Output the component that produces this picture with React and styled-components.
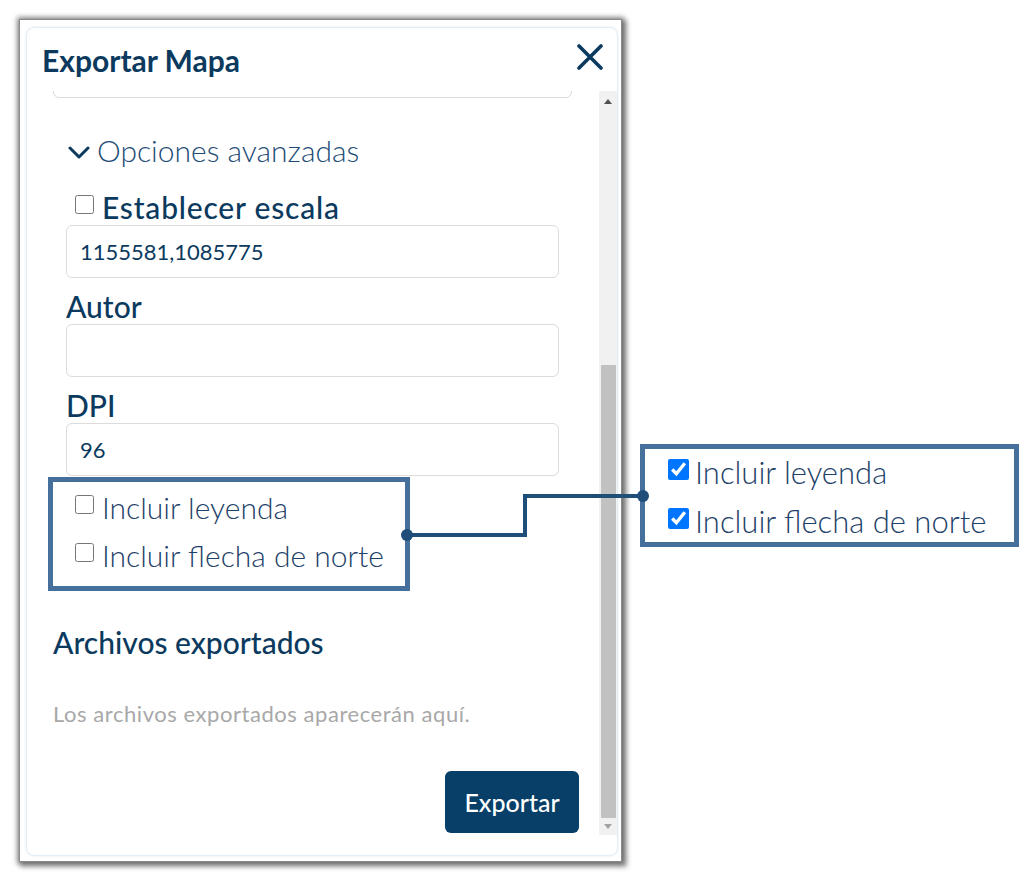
import styled, { createGlobalStyle } from "styled-components";

const GlobalStyle = createGlobalStyle`
  html, body {
    margin: 0;
    padding: 0;
    background: #ffffff;
  }
  body {
    font-family: Lato, "Open Sans", sans-serif;
    width: 1027px;
    height: 878px;
    overflow: hidden;
  }
`;

const navy = "#0b3a5e";

const ExportMap = () => {
  return (
    <Page>
      <GlobalStyle />
      <Shot>
        <Card>
          <Header>
            <Title>Exportar Mapa</Title>
            <CloseButton aria-label="Cerrar">
              <svg width="26" height="26" viewBox="0 0 26 26">
                <path d="M2 2 L24 24 M24 2 L2 24" stroke={navy} strokeWidth="3.6" strokeLinecap="round" />
              </svg>
            </CloseButton>
          </Header>

          <Body>
            <Content>
              <CutInput />

              <Advanced>
                <Toggle>
                  <svg width="22" height="14" viewBox="0 0 22 14">
                    <path d="M2 2 L11 11 L20 2" fill="none" stroke={navy} strokeWidth="3" strokeLinecap="round" strokeLinejoin="round" />
                  </svg>
                  <span>Opciones avanzadas</span>
                </Toggle>

                <CheckRow $strong>
                  <Box type="checkbox" readOnly />
                  Establecer escala
                </CheckRow>
                <Field defaultValue="1155581,1085775" />

                <Label>Autor</Label>
                <Field defaultValue="" />

                <Label>DPI</Label>
                <Field defaultValue="96" />

                <Highlight>
                  <CheckRow>
                    <Box type="checkbox" readOnly />
                    Incluir leyenda
                  </CheckRow>
                  <CheckRow>
                    <Box type="checkbox" readOnly />
                    Incluir flecha de norte
                  </CheckRow>
                </Highlight>
              </Advanced>

              <Section>Archivos exportados</Section>
              <Hint>Los archivos exportados aparecerán aquí.</Hint>

              <Footer>
                <ExportButton>Exportar</ExportButton>
              </Footer>
            </Content>

            <ScrollBar>
              <Arrow $up />
              <Thumb />
              <Arrow />
            </ScrollBar>
          </Body>
        </Card>
      </Shot>

      <Callout>
        <CheckRow $big>
          <Box type="checkbox" checked readOnly $big />
          Incluir leyenda
        </CheckRow>
        <CheckRow $big>
          <Box type="checkbox" checked readOnly $big />
          Incluir flecha de norte
        </CheckRow>
      </Callout>

      <Connector width="1027" height="878" viewBox="0 0 1027 878">
        <path d="M407 535 H525 V496 H643" fill="none" stroke="#1f4e79" strokeWidth="4" />
        <circle cx="407" cy="535" r="6" fill="#1f4e79" />
        <circle cx="643" cy="496" r="6" fill="#1f4e79" />
      </Connector>
    </Page>
  );
};

const Page = styled.div`
  position: relative;
  display: flex;
  align-items: flex-start;
  padding: 20px 0 0 20px;
`;

const Shot = styled.div`
  width: 601px;
  height: 841px;
  box-sizing: border-box;
  background: #fff;
  padding: 8px 4px 6px 7px;
  box-shadow: 0 0 0 1px #8a8a8a, 0 0 5px 3px rgba(0, 0, 0, 0.4),
    3px 3px 5px 3px rgba(0, 0, 0, 0.35);
`;

const Card = styled.div`
  height: 100%;
  box-sizing: border-box;
  display: flex;
  flex-direction: column;
  background: #fff;
  border-radius: 7px;
  box-shadow: 0 0 3px rgba(40, 110, 170, 0.35);
  padding-bottom: 20px;
`;

const Header = styled.div`
  height: 63px;
  flex: none;
  display: flex;
  align-items: center;
  justify-content: space-between;
  padding: 0 14px 0 15px;
  box-sizing: border-box;
`;

const Title = styled.h1`
  margin: 0;
  font-size: 30px;
  font-weight: 700;
  color: ${navy};
`;

const CloseButton = styled.button`
  border: none;
  background: none;
  padding: 0;
  display: flex;
  margin-top: -6px;
`;

const Body = styled.div`
  flex: 1;
  display: flex;
  overflow: hidden;
`;

const Content = styled.div`
  flex: 1;
  padding: 0 27px 0 26px;
  display: flex;
  flex-direction: column;
`;

const CutInput = styled.div`
  height: 52px;
  margin-top: -45px;
  border: 1px solid #dcdcdc;
  border-radius: 6px;
  box-sizing: border-box;
  flex: none;
`;

const Advanced = styled.div`
  padding: 0 13px;
  display: flex;
  flex-direction: column;
`;

const Toggle = styled.div`
  display: flex;
  align-items: center;
  gap: 7px;
  height: 30px;
  margin-top: 37px;
  padding-left: 2px;
  font-size: 30px;
  font-weight: 300;
  color: #1d4c76;
  svg {
    margin-top: 6px;
  }
`;

const CheckRow = styled.label`
  display: flex;
  align-items: center;
  gap: ${(p) => (p.$big ? "6px" : "8px")};
  height: 30px;
  padding-left: ${(p) => (p.$big ? "0" : "9px")};
  font-size: ${(p) => (p.$big ? "31px" : "30px")};
  font-weight: ${(p) => (p.$strong ? 500 : 300)};
  letter-spacing: ${(p) => (p.$strong ? "0.8px" : "0")};
  color: ${(p) => (p.$strong ? navy : "#1d4168")};
  margin-top: ${(p) => (p.$strong ? "27px" : "0")};
`;

const Box = styled.input`
  width: ${(p) => (p.$big ? "21px" : "19px")};
  height: ${(p) => (p.$big ? "21px" : "19px")};
  margin: -6px 0 0 0;
  accent-color: #0075ff;
`;

const Field = styled.input`
  height: 53px;
  margin-top: 3px;
  box-sizing: border-box;
  border: 1px solid #dcdcdc;
  border-radius: 6px;
  padding: 0 13px;
  font-family: Lato, sans-serif;
  font-size: 22px;
  color: ${navy};
  outline: none;
`;

const Label = styled.div`
  height: 30px;
  line-height: 30px;
  margin-top: 13px;
  font-size: 30px;
  font-weight: 500;
  color: ${navy};
`;

const Highlight = styled.div`
  width: 362px;
  height: 114px;
  box-sizing: border-box;
  margin: 1px 0 0 -18px;
  border: 5px solid #44709b;
  padding: 10px 0 0 13px;
  display: flex;
  flex-direction: column;
  gap: 18px;
`;

const Section = styled.div`
  height: 30px;
  line-height: 30px;
  margin-top: 36px;
  font-size: 30px;
  font-weight: 500;
  color: ${navy};
`;

const Hint = styled.div`
  height: 24px;
  line-height: 24px;
  margin-top: 45px;
  font-size: 22px;
  letter-spacing: 0.55px;
  color: #a8a8a8;
`;

const Footer = styled.div`
  display: flex;
  justify-content: flex-end;
  margin: 45px -7px 0 0;
`;

const ExportButton = styled.button`
  width: 134px;
  height: 62px;
  border: none;
  border-radius: 6px;
  background: #073f68;
  color: #fff;
  font-family: Lato, sans-serif;
  font-size: 25px;
  font-weight: 500;
`;

const ScrollBar = styled.div`
  width: 18px;
  flex: none;
  background: #f1f1f1;
  display: flex;
  flex-direction: column;
  align-items: center;
`;

const Arrow = styled.div`
  height: 17px;
  width: 100%;
  flex: none;
  display: flex;
  align-items: center;
  justify-content: center;
  &::after {
    content: "";
    border-left: 4px solid transparent;
    border-right: 4px solid transparent;
    ${(p) =>
      p.$up
        ? "border-bottom: 5px solid #505050; margin-top: 4px;"
        : "border-top: 5px solid #a3a3a3;"}
  }
`;

const Thumb = styled.div`
  width: 15px;
  margin-top: auto;
  height: 453px;
  background: #c1c1c1;
  border-radius: 1px;
`;

const Callout = styled.div`
  width: 379px;
  height: 103px;
  box-sizing: border-box;
  margin: 424px 0 0 19px;
  border: 5px solid #44709b;
  padding: 8px 0 0 23px;
  display: flex;
  flex-direction: column;
  gap: 19px;
`;

const Connector = styled.svg`
  position: absolute;
  left: 0;
  top: 0;
  pointer-events: none;
`;

export default ExportMap;
